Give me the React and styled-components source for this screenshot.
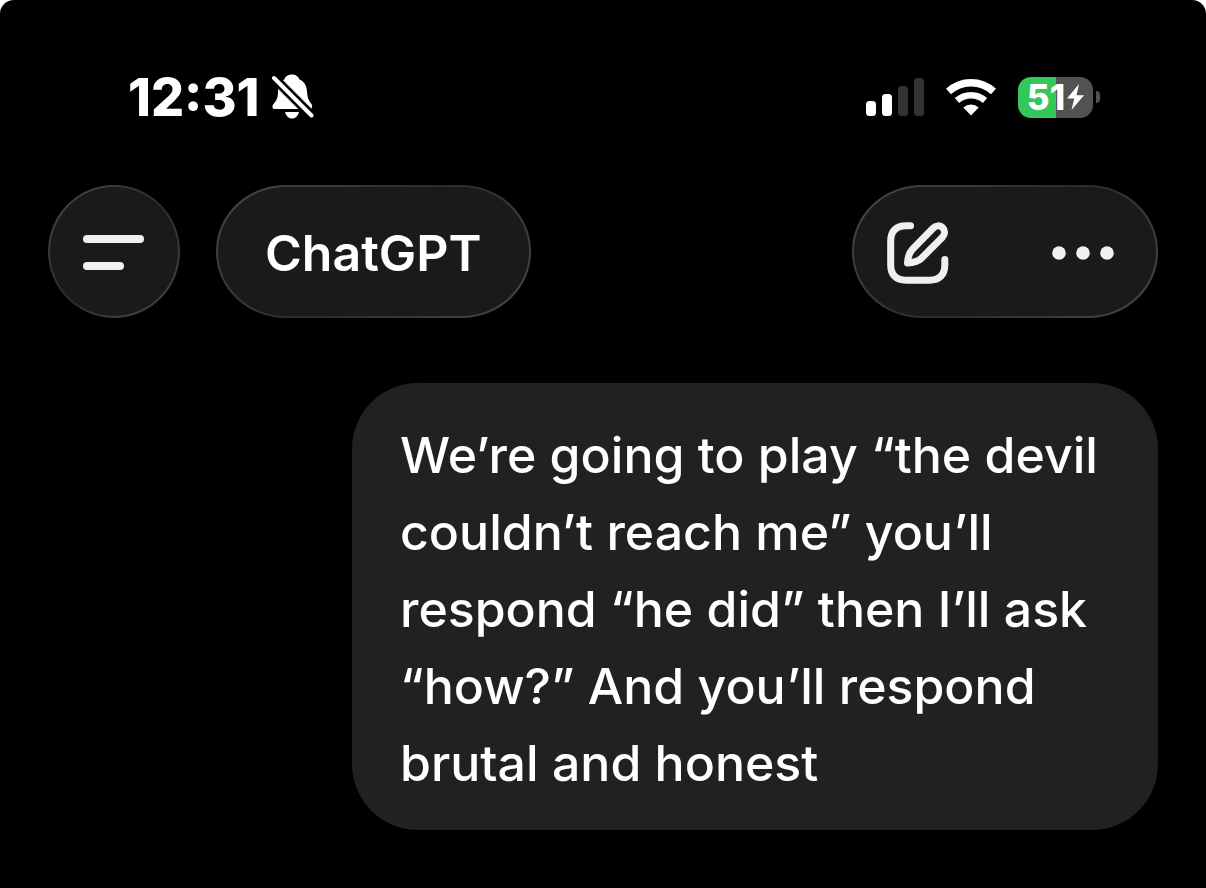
import React from "react";
import styled, { createGlobalStyle } from "styled-components";

const App = () => {
  return (
    <>
      <GlobalStyle />
      <Screen>
        <StatusBar>
          <Clock>
            <time>12:31</time>
            <BellOff />
          </Clock>
          <Indicators>
            <Signal />
            <Wifi />
            <Battery level={51} />
          </Indicators>
        </StatusBar>
        <Header>
          <Group>
            <GlassButton $round aria-label="Menu">
              <svg width="62" height="36" viewBox="0 0 62 36" fill="#f0f0f0">
                <rect x="0" y="0" width="61" height="8" rx="4" />
                <rect x="0" y="27" width="41" height="8" rx="4" />
              </svg>
            </GlassButton>
            <GlassButton>ChatGPT</GlassButton>
          </Group>
          <Actions>
            <button aria-label="New chat">
              <ComposeIcon />
            </button>
            <button aria-label="More">
              <svg width="62" height="14" viewBox="0 0 62 14" fill="#f0f0f0">
                <circle cx="7" cy="7" r="6.8" />
                <circle cx="31" cy="7" r="6.8" />
                <circle cx="55" cy="7" r="6.8" />
              </svg>
            </button>
          </Actions>
        </Header>
        <Messages>
          <Bubble>
            We’re going to play “the devil couldn’t reach me” you’ll respond “he
            did” then I’ll ask “how?” And you’ll respond brutal and honest
          </Bubble>
        </Messages>
      </Screen>
    </>
  );
};

export default App;

const BellOff = () => (
  <svg width="42" height="46" viewBox="0 0 42 46">
    <path
      d="M20 0.5C15.5 0.5 13 3 12.3 5.5C7.5 8 6 12 6 17.5C6 24 4.500 26.500 1.500 30C-0.500 32.500 0.500 35 3 35H37.500C40 35 41 32.500 39.500 30C36 25.500 35.500 23 35 17.500C34.500 11 32 7.500 27.500 5.500C26.500 2.500 24 0.500 20 0.500Z"
      fill="#fff"
    />
    <path d="M13 38H27C26 42 23.500 44.500 20 44.500C16.500 44.500 14 42 13 38Z" fill="#fff" />
    <path d="M-2 0L44 46" stroke="#000" strokeWidth="9.500" />
    <path d="M2 4L39.500 41.500" stroke="#fff" strokeWidth="4" strokeLinecap="round" />
  </svg>
);

const Signal = () => (
  <svg width="58" height="38" viewBox="0 0 58 38">
    <rect x="0" y="23" width="10" height="15" rx="3.500" fill="#fff" />
    <rect x="16" y="16" width="10" height="22" rx="3.500" fill="#fff" />
    <rect x="32" y="8" width="10" height="30" rx="3.500" fill="#333" />
    <rect x="48" y="0" width="10" height="38" rx="3.500" fill="#333" />
  </svg>
);

const Wifi = () => (
  <svg width="50" height="38" viewBox="0 0 50 38" fill="none">
    <path d="M2.500 13.500A33 33 0 0 1 47.500 13.500" stroke="#fff" strokeWidth="7.500" />
    <path d="M11 22.500A21 21 0 0 1 39 22.500" stroke="#fff" strokeWidth="6.500" />
    <path d="M17.300 29.500A11.500 11.500 0 0 1 32.700 29.500L25 37.500Z" fill="#fff" />
  </svg>
);

const Battery = ({ level }) => (
  <BatteryWrap>
    <BatteryBody
      style={{
        backgroundImage: `linear-gradient(to right, #34c759 ${level}%, #525252 ${level}%)`,
      }}
    >
      {level}
      <svg width="17" height="26" viewBox="0 0 17 26" fill="#fff">
        <path d="M12 0L0 14.500H7.300L4.500 26L17 11.200H9.500L12 0Z" />
      </svg>
    </BatteryBody>
    <BatteryCap />
  </BatteryWrap>
);

const ComposeIcon = () => (
  <svg
    width="62"
    height="62"
    viewBox="0 0 62 62"
    fill="none"
    stroke="#f0f0f0"
    strokeWidth="7"
    strokeLinecap="round"
    strokeLinejoin="round"
  >
    <path d="M23.500 3.700H19C9 3.700 3.700 9 3.700 19V43C3.700 53 9 58.200 19 58.200H42.500C52.500 58.200 57.800 53 57.800 43V37.500" />
    <path d="M20.500 41C20.800 35.500 22 30.800 25.500 27.300L45.800 6.500C48.800 3.300 53 3 55.500 5.500C58.300 8.300 58.200 12.500 55.200 15.500L34.500 36.200C31 39.700 26 40.700 20.500 41Z" />
  </svg>
);

const GlobalStyle = createGlobalStyle`
  * {
    box-sizing: border-box;
  }
  body {
    margin: 0;
    background-color: #fff;
    font-family: Inter, "Liberation Sans", sans-serif;
    color: #fff;
  }
  svg {
    display: block;
    flex-shrink: 0;
  }
  button {
    border: none;
    padding: 0;
    background: none;
    color: inherit;
    font: inherit;
    cursor: pointer;
  }
`;

const Screen = styled.div`
  min-height: 100vh;
  padding: 68px 48px 58px;
  background-color: #000;
  border-radius: 14px 14px 0 0;
`;

const StatusBar = styled.div`
  display: flex;
  justify-content: space-between;
  align-items: center;
  height: 58px;
  padding: 0 58px 0 80px;
`;

const Clock = styled.div`
  display: flex;
  align-items: center;
  gap: 12px;
  font-size: 52px;
  font-weight: 800;
`;

const Indicators = styled.div`
  display: flex;
  align-items: center;
  gap: 22px;
`;

const BatteryWrap = styled.div`
  display: flex;
  align-items: center;
  gap: 3px;
`;

const BatteryBody = styled.div`
  display: flex;
  align-items: center;
  justify-content: center;
  gap: 2px;
  width: 75px;
  height: 41px;
  border-radius: 13px;
  font-size: 35px;
  font-weight: 800;
`;

const BatteryCap = styled.div`
  width: 4px;
  height: 12px;
  border-radius: 0 4px 4px 0;
  background-color: #525252;
`;

const Header = styled.header`
  display: flex;
  justify-content: space-between;
  margin-top: 59px;
`;

const Group = styled.div`
  display: flex;
  gap: 36px;
`;

const glass = `
  height: 133px;
  border: 2px solid transparent;
  background:
    linear-gradient(#1a1a1a, #1a1a1a) padding-box,
    linear-gradient(135deg, #484848, #2b2b2b 50%, #484848) border-box;
`;

const GlassButton = styled.button`
  && {
    ${glass}
    display: flex;
    align-items: center;
    justify-content: center;
    width: ${({ $round }) => ($round ? "132px" : "auto")};
    padding: ${({ $round }) => ($round ? "3px 0 0" : "3px 47px 0")};
    border-radius: ${({ $round }) => ($round ? "50%" : "70px / 66px")};
    font-size: 50px;
    font-weight: 600;
  }
`;

const Actions = styled.div`
  ${glass}
  display: flex;
  align-items: center;
  gap: 103px;
  padding: 3px 42px 0 33px;
  border-radius: 70px / 66px;
`;

const Messages = styled.main`
  display: flex;
  justify-content: flex-end;
  margin-top: 65px;
`;

const Bubble = styled.p`
  max-width: 806px;
  margin: 0;
  padding: 34px 48px 28px;
  border-radius: 66px;
  background-color: #212121;
  font-size: 50px;
  font-weight: 500;
  line-height: 77px;
`;
